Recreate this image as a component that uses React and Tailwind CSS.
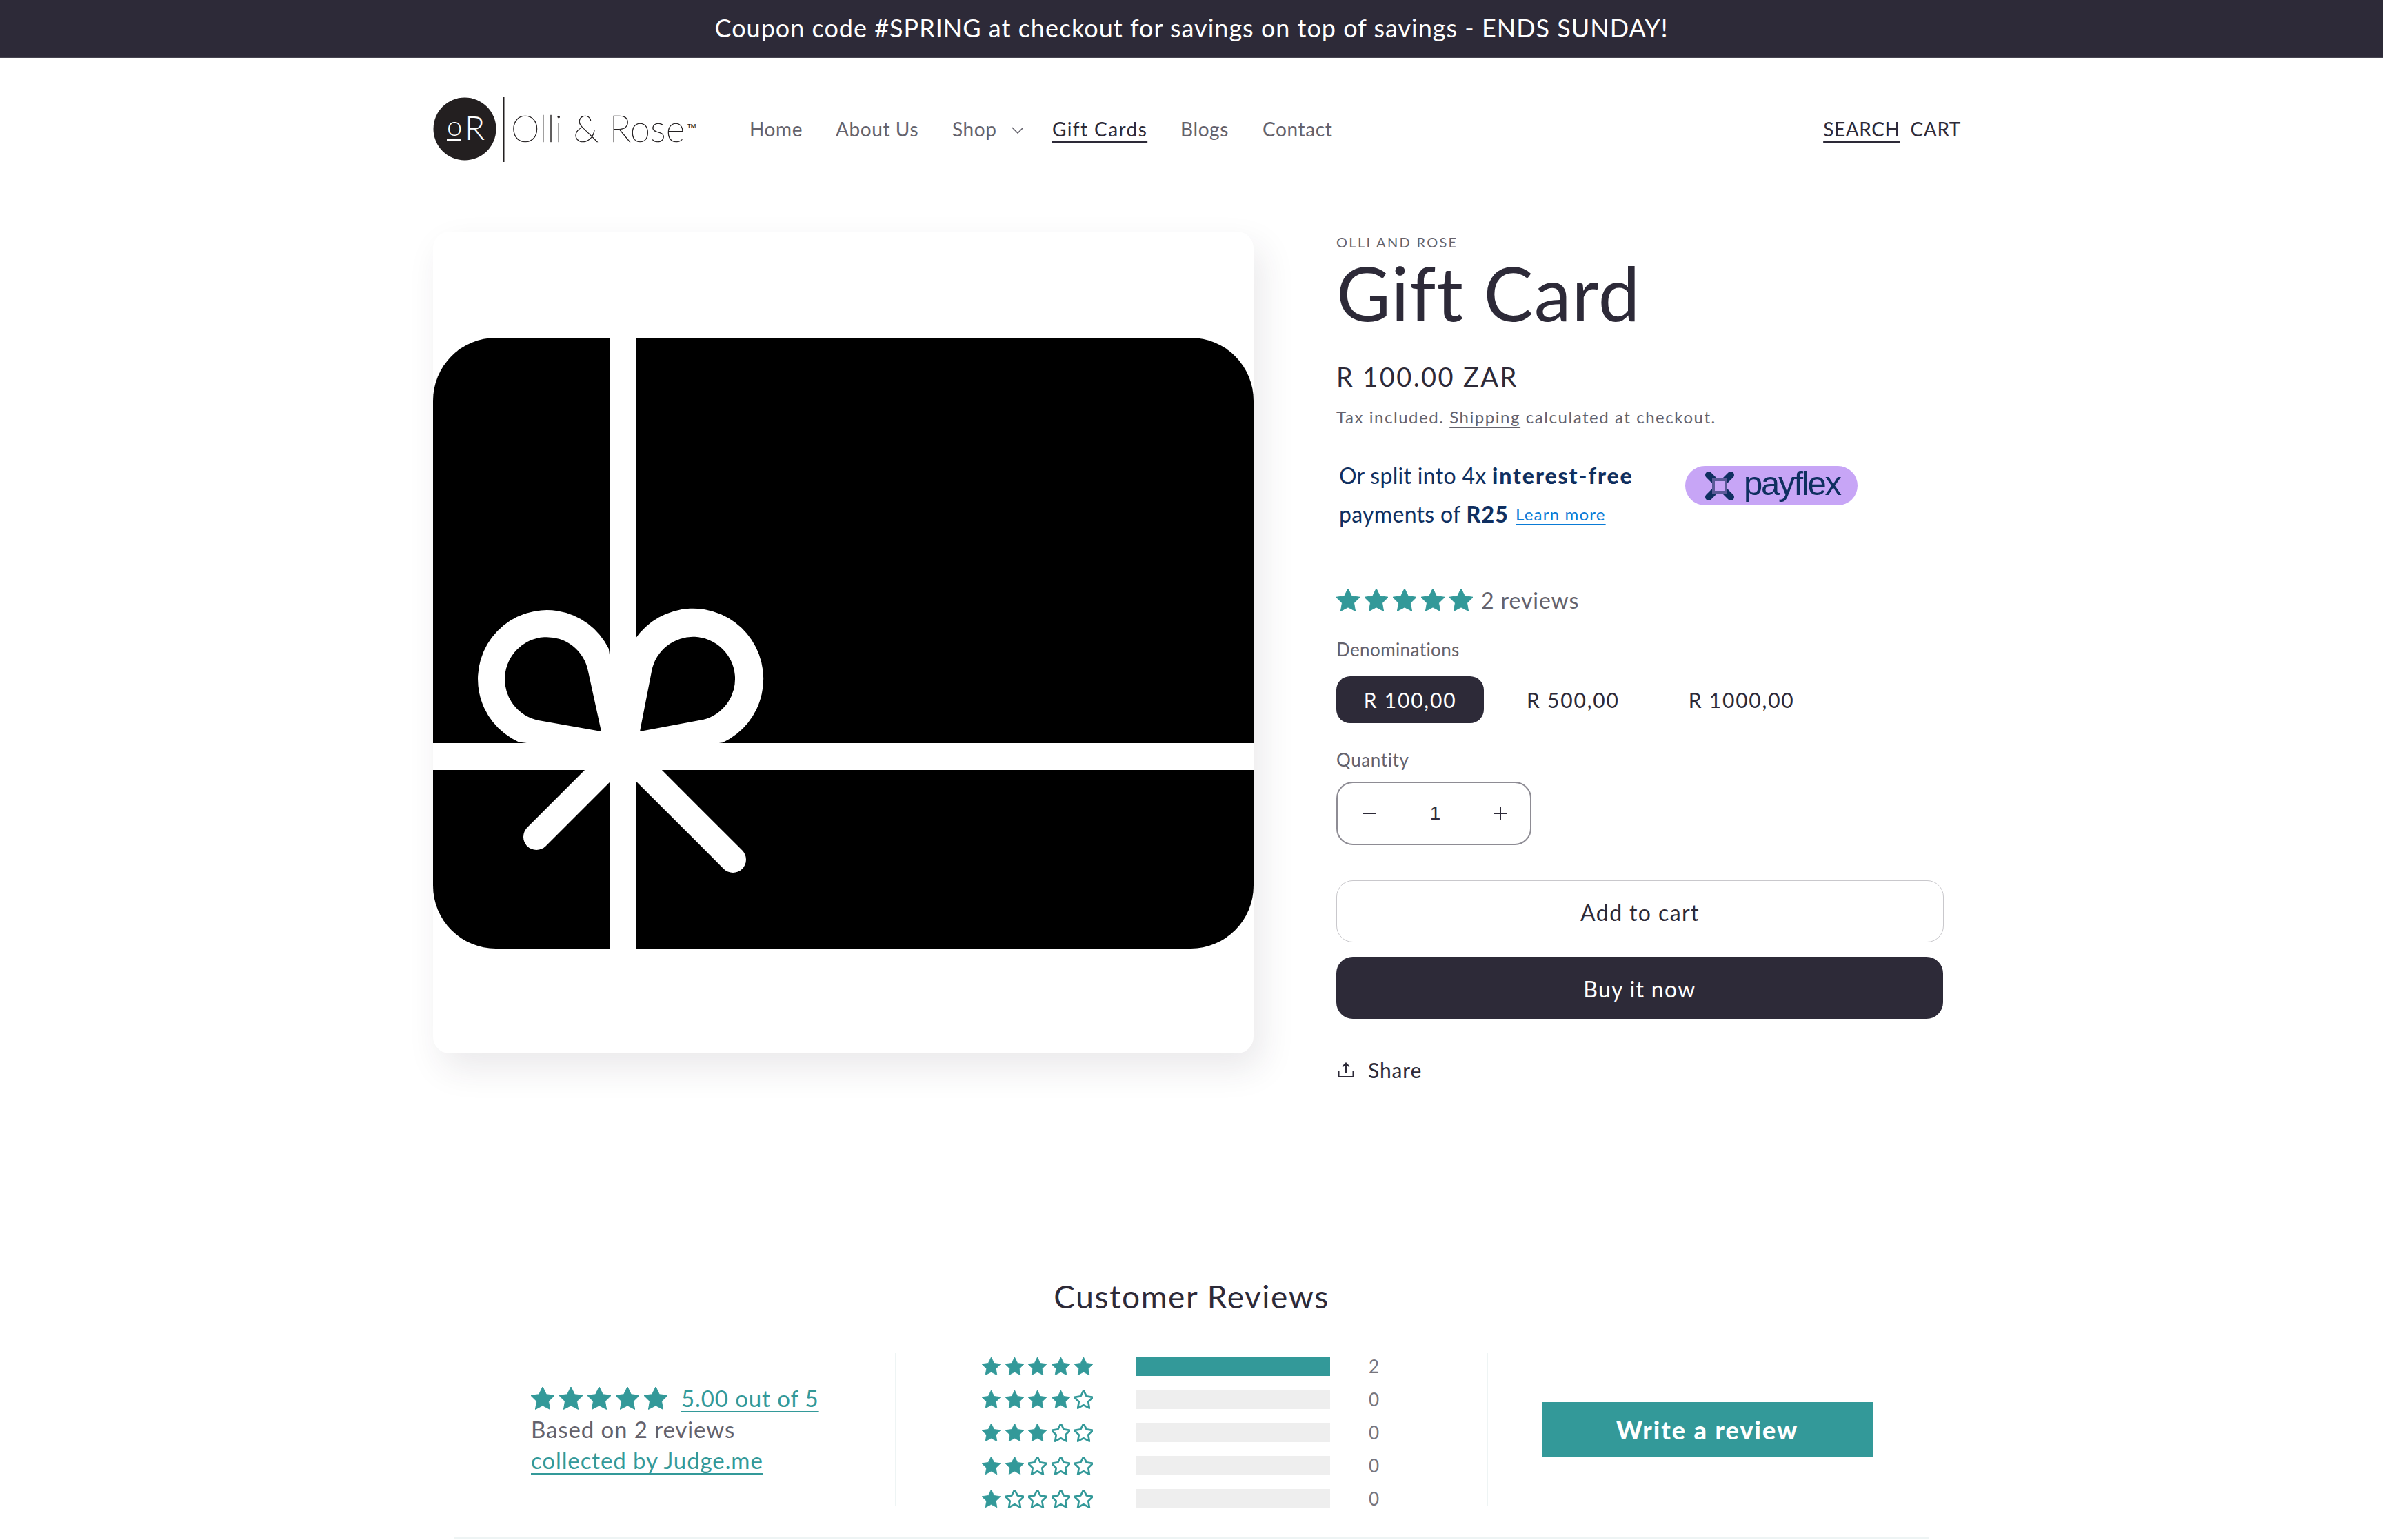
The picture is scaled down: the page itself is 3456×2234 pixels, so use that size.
const STAR = "M12 2l3.09 6.26L22 9.27l-5 4.87 1.18 6.88L12 17.77l-6.18 3.25L7 14.14 2 9.27l6.91-1.01L12 2z";

function Star({ size, filled = true }) {
  return (
    <svg width={size} height={size} viewBox="2 2 20 20" className="shrink-0 block">
      <path
        d={STAR}
        fill={filled ? "#339999" : "none"}
        stroke="#339999"
        strokeWidth={filled ? 0.6 : 2}
        strokeLinejoin="round"
      />
    </svg>
  );
}

function Stars({ size, count = 5, className }) {
  return (
    <div className={"flex " + className}>
      {[0, 1, 2, 3, 4].map((i) => (
        <Star key={i} size={size} filled={i < count} />
      ))}
    </div>
  );
}

function Logo() {
  return (
    <svg width="382" height="95" viewBox="0 0 382 95" className="block shrink-0">
      <circle cx="46" cy="47" r="45.5" fill="#231f20" />
      <text x="20" y="57" fontFamily="Lato, sans-serif" fontWeight="300" fontSize="40" fill="#fff" textLength="21">o</text>
      <rect x="20" y="62" width="21" height="2" fill="#fff" />
      <text x="46" y="63" fontFamily="Lato, sans-serif" fontWeight="300" fontSize="48" fill="#fff">R</text>
      <rect x="101.5" y="0" width="2" height="95" fill="#231f20" />
      <text x="113" y="66" fontFamily="Lato, sans-serif" fontWeight="200" fontSize="53" textLength="252" lengthAdjust="spacing" fill="#231f20" stroke="#231f20" strokeWidth="0.6">Olli &amp; Rose</text>
      <text x="369" y="46" fontFamily="Lato, sans-serif" fontWeight="700" fontSize="8" fill="#231f20">TM</text>
    </svg>
  );
}

function GiftCardArt() {
  return (
    <svg viewBox="0 0 1190 1192" width="1190" height="1192" className="block">
      <rect x="0" y="154" width="1190" height="886" rx="91" fill="#000" />
      <rect x="257" y="154" width="38" height="886" fill="#fff" />
      <rect x="0" y="742" width="1190" height="39" fill="#fff" />
      <path d="M254.800 605 A100 100 0 1 0 124.300 740.400 L276 760 Z" fill="#fff" />
      <path d="M293.200 590.800 A102 102 0 1 1 420 741.300 L276 760 Z" fill="#fff" />
      <path d="M224.900 637.400 L244 725 L153 709 A61 61 0 1 1 224.900 637.400 Z" fill="#000" />
      <path d="M317.200 637 L300 725 L391.700 708 A61 61 0 1 0 317.200 637 Z" fill="#000" />
      <path d="M150 878 L262 766" stroke="#fff" strokeWidth="38" strokeLinecap="round" />
      <path d="M435 911 L300 776" stroke="#fff" strokeWidth="38" strokeLinecap="round" />
    </svg>
  );
}

function PayflexBadge() {
  return (
    <div className="ml-[72px] mt-[14px] w-[250px] h-[57px] rounded-[30px] bg-[#c7a5f6] flex items-center pl-[28px] gap-[13px] blur-[0.6px]">
      <svg width="44" height="44" viewBox="0 0 44 44" className="shrink-0">
        <path d="M6 6 L38 38 M38 6 L6 38" stroke="#0f2f60" strokeWidth="10" strokeLinecap="round" />
        <rect x="14" y="14" width="16" height="16" fill="#c7a5f6" />
        <rect x="13" y="13" width="18" height="18" fill="none" stroke="#5a5a98" strokeWidth="4" />
      </svg>
      <span className="font-['Liberation_Sans',sans-serif] text-[49px] leading-none tracking-[-2.2px] text-[#0f2f60] -mt-[6px]">payflex</span>
    </div>
  );
}

const rows = [
  { n: 5, c: 2 },
  { n: 4, c: 0 },
  { n: 3, c: 0 },
  { n: 2, c: 0 },
  { n: 1, c: 0 },
];

export default function App() {
  return (
    <div className="h-[2234px] overflow-hidden bg-white text-[#2d2a38] font-['Lato',sans-serif]">
      <div className="h-[84px] pb-[3px] bg-[#2d2a38] border-b-2 border-[#45434f] flex items-center justify-center text-white text-[36px] tracking-[1px]">
        Coupon code #SPRING at checkout for savings on top of savings - ENDS SUNDAY!
      </div>

      <header className="h-[206px] pl-[628px] pr-[612px] flex items-center">
        <Logo />
        <nav className="ml-[77px] flex items-center text-[28px] text-[#64626c] tracking-[0.6px]">
          <span className="w-[125px]">Home</span>
          <span className="w-[169px]">About Us</span>
          <span className="w-[86px]">Shop</span>
          <svg width="18" height="10" viewBox="0 0 18 10" className="mr-[41px] mt-[4px]">
            <path d="M1 1 L9 9 L17 1" fill="none" stroke="#64626c" strokeWidth="1.6" />
          </svg>
          <span className="w-[186px] text-[#2d2a38] underline underline-offset-[7px] decoration-[3px] tracking-[1.4px]">Gift Cards</span>
          <span className="w-[119px]">Blogs</span>
          <span>Contact</span>
        </nav>
        <div className="ml-auto flex gap-[15px] text-[28px] tracking-[0.6px]">
          <span className="underline underline-offset-[7px] decoration-[2px]">SEARCH</span>
          <span>CART</span>
        </div>
      </header>

      <main className="h-[1192px] mt-[46px] pl-[628px] flex items-start gap-[120px]">
        <div className="w-[1190px] h-[1192px] shrink-0 rounded-[24px] bg-white shadow-[12px_22px_50px_rgba(45,42,56,0.10)] overflow-hidden">
          <GiftCardArt />
        </div>

        <div className="w-[880px] flex flex-col">
          <div className="h-[30px] flex items-center text-[20px] tracking-[2.3px] text-[#64626c]">OLLI AND ROSE</div>
          <h1 className="mt-[4px] h-[108px] flex items-center text-[108px] leading-none tracking-[1px]">Gift Card</h1>
          <div className="mt-[42px] h-[52px] flex items-center text-[38px] tracking-[2.4px]">R 100.00 ZAR</div>
          <div className="mt-[15px] h-[36px] flex items-center text-[24px] tracking-[1.55px] text-[#64626c] whitespace-pre">
            Tax included. <span className="underline underline-offset-[5px] decoration-[2px]">Shipping</span> calculated at checkout.
          </div>
          <div className="mt-[39px] flex items-start">
            <div className="w-[430px] ml-[4px] text-[#0f2f60] text-[32px] tracking-[0.3px]">
              <div className="h-[56px] flex items-center whitespace-pre">Or split into 4x <b className="font-black tracking-[1.9px]">interest-free</b></div>
              <div className="h-[56px] flex items-center whitespace-pre">payments of <b className="font-black tracking-[1.2px]">R25</b><span className="ml-[10px] text-[24px] text-[#0a7bd6] underline underline-offset-[5px] tracking-[1.2px]">Learn more</span></div>
            </div>
            <PayflexBadge />
          </div>
          <div className="mt-[79px] h-[36px] flex items-center">
            <Stars size={34} className="gap-[7px]" />
            <span className="ml-[12px] text-[32px] tracking-[0.9px] text-[#64626c]">2 reviews</span>
          </div>
          <div className="mt-[35px] h-[36px] flex items-center text-[26px] tracking-[0.4px] text-[#64626c]">Denominations</div>
          <div className="mt-[21px] flex items-center text-[30px] tracking-[1.8px]">
            <span className="w-[214px] h-[68px] rounded-[20px] bg-[#2d2a38] text-white flex items-center justify-center">R 100,00</span>
            <span className="ml-[62px]">R 500,00</span>
            <span className="ml-[100px]">R 1000,00</span>
          </div>
          <div className="mt-[35px] h-[36px] flex items-center text-[26px] tracking-[0.6px] text-[#64626c]">Quantity</div>
          <div className="mt-[14px] w-[283px] h-[92px] rounded-[24px] border-2 border-[#8e8c94] flex items-center justify-between pl-[36px] pr-[34px] font-['Liberation_Sans',sans-serif]">
            <svg width="20" height="4" viewBox="0 0 20 4"><rect y="1" width="20" height="2" fill="#2d2a38" /></svg>
            <span className="text-[28px]">1</span>
            <svg width="18" height="18" viewBox="0 0 18 18"><path d="M0 9H18M9 0V18" stroke="#2d2a38" strokeWidth="2" /></svg>
          </div>
          <div className="mt-[51px] h-[90px] w-[881px] pt-[4px] rounded-[24px] border border-[#c9c8cc] flex items-center justify-center text-[32px] tracking-[1.4px]">Add to cart</div>
          <div className="mt-[21px] h-[90px] w-[880px] pt-[4px] rounded-[24px] bg-[#2d2a38] text-white flex items-center justify-center text-[32px] tracking-[1.3px]">Buy it now</div>
          <div className="mt-[56px] h-[36px] flex items-center text-[30px] tracking-[0.9px]">
            <svg width="24" height="24" viewBox="0 0 24 24" className="ml-[2px] mr-[20px]" fill="none" stroke="#2d2a38" strokeWidth="2">
              <path d="M12 16V3M7 7.5L12 2.5L17 7.5M1.5 14V22H22.500V14" />
            </svg>
            Share
          </div>
        </div>
      </main>

      <section className="mt-[322px] flex flex-col items-center">
        <h2 className="h-[60px] flex items-center text-[46px] tracking-[1.6px]">Customer Reviews</h2>
        <div className="mt-[53px] w-[2140px] h-[222px] flex">
          <div className="w-[642px] border-r-2 border-[#eef4f4] pl-[112px] flex flex-col justify-center text-[33px] tracking-[0.9px]">
            <div className="h-[46px] flex items-center">
              <Stars size={34} className="gap-[7px]" />
              <span className="ml-[20px] text-[#339999] underline underline-offset-[6px] decoration-[2px]">5.00 out of 5</span>
            </div>
            <div className="h-[44px] flex items-center text-[#64626c]">Based on 2 reviews</div>
            <div className="h-[46px] flex items-center text-[#339999] underline underline-offset-[6px] decoration-[2px]">collected by Judge.me</div>
          </div>
          <div className="w-[858px] border-r-2 border-[#eef4f4] pl-[124px] pt-[5px] flex flex-col gap-[20px]">
            {rows.map((r) => (
              <div key={r.n} className="h-[28px] flex items-center">
                <Stars size={27} count={r.n} className="gap-[6.500px] w-[160px]" />
                <div className="ml-[64px] w-[281px] h-[28px] bg-[#eeeeee]">
                  {r.c > 0 && <div className="w-full h-full bg-[#339999]" />}
                </div>
                <span className="ml-[56px] text-[26px] text-[#77757d]">{r.c}</span>
              </div>
            ))}
          </div>
          <div className="pl-[78px] flex items-center">
            <div className="w-[480px] h-[80px] bg-[#339999] text-white flex items-center justify-center text-[36px] font-black tracking-[2px]">Write a review</div>
          </div>
        </div>
        <div className="mt-[45px] w-[2140px] h-[3px] bg-[#eef4f4]" />
      </section>
    </div>
  );
}
